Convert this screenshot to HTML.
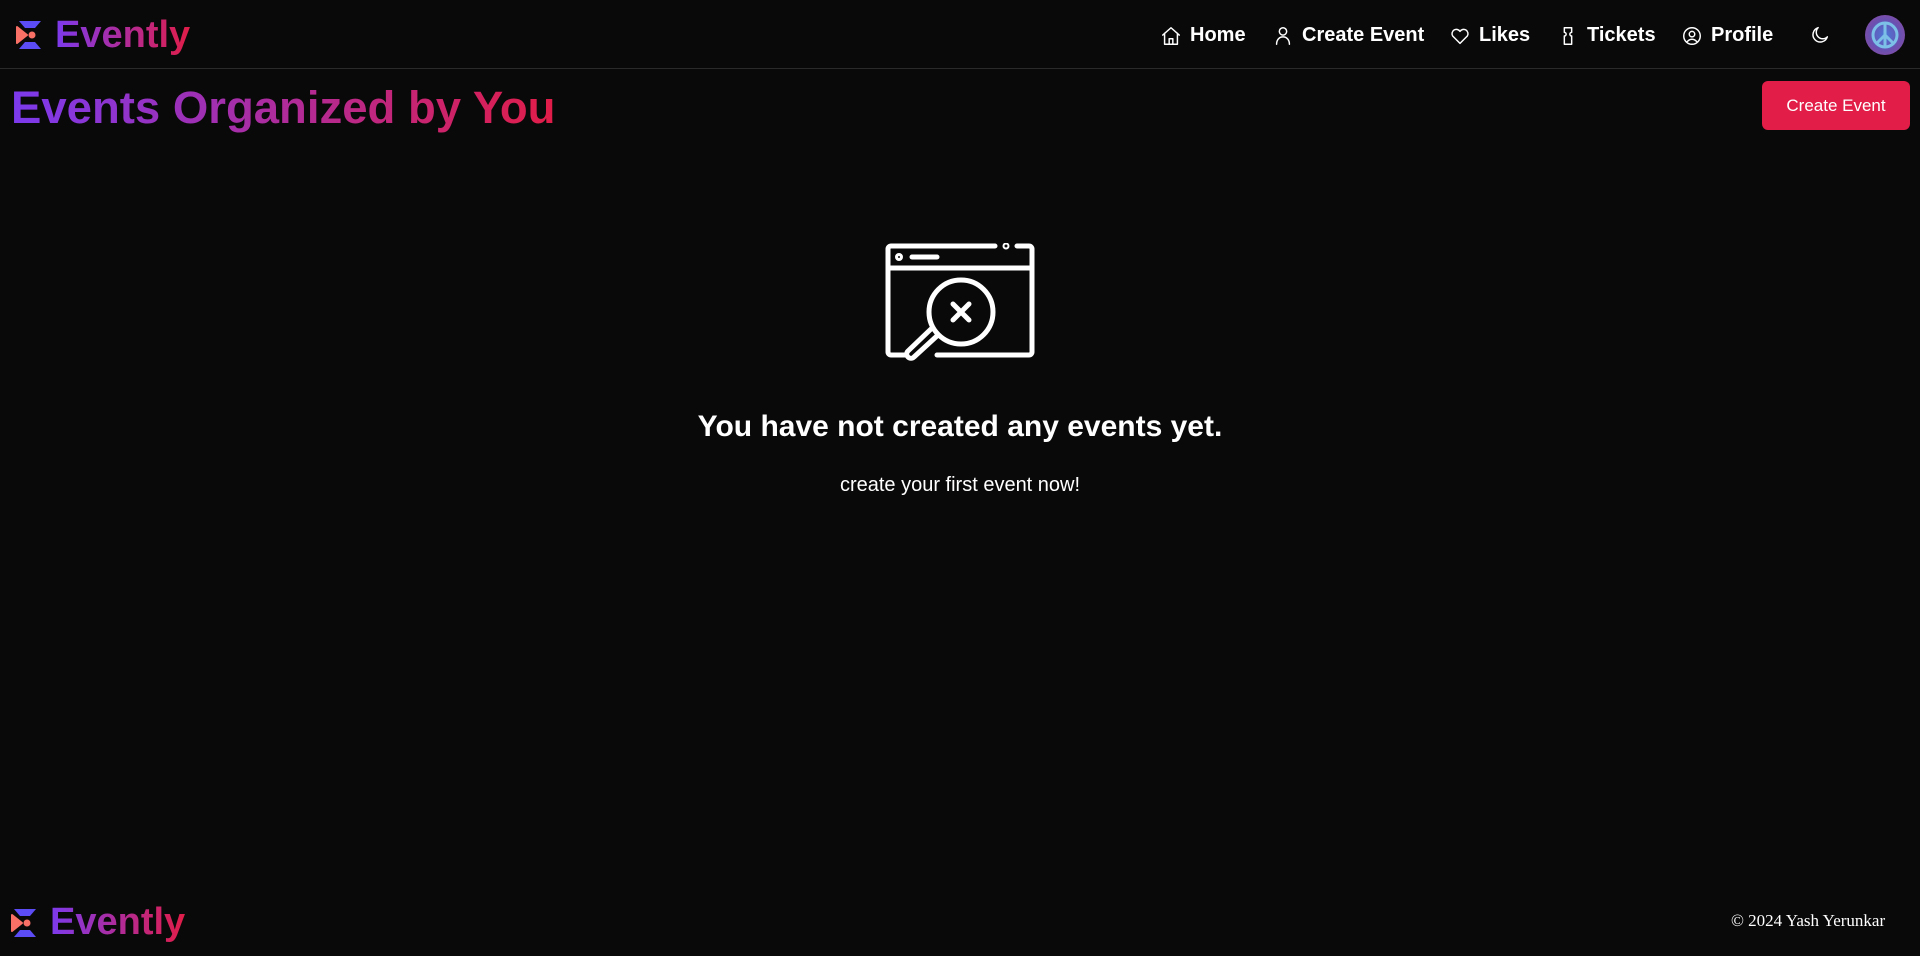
<!DOCTYPE html>
<html><head><meta charset="utf-8"><style>
*{margin:0;padding:0;box-sizing:border-box}
body{width:1920px;height:956px;background:#0a0909;color:#fff;font-family:"Liberation Sans",sans-serif;position:relative;overflow:hidden}
.grad{background:linear-gradient(90deg,#7c3aed,#e11d48);-webkit-background-clip:text;background-clip:text;color:transparent;font-weight:bold}
.nav{position:absolute;top:0;left:0;width:1920px;height:69px;border-bottom:1px solid #2a2a2a}
.abs{position:absolute}
.ni{position:absolute;top:24px;font-size:20px;font-weight:bold;color:#fff;display:flex;align-items:center;gap:8px}
svg.i{width:22px;height:22px;fill:none;stroke:#fff;stroke-width:1.6;stroke-linecap:round;stroke-linejoin:round}
</style></head><body>
<div class="nav">
  <svg class="abs" style="left:15px;top:20px" width="28" height="30" viewBox="0 0 28 30">
    <path d="M4 1h22l-6 7H10z" fill="#5b4cf5"/><path d="M4 29h22l-6-7H10z" fill="#5b4cf5"/>
    <path d="M2 7l10 8-10 8z" fill="#f97066" stroke="#f97066" stroke-width="2" stroke-linejoin="round"/><circle cx="17" cy="15" r="3.5" fill="#f97066"/>
  </svg>
  <div class="abs grad" style="left:55px;top:14px;font-size:38px">Evently</div>
  <div class="ni" style="left:1160px"><svg class="i" viewBox="0 0 24 24"><path d="M3 11l9-8 9 8M5 9v12h14V9M10 21v-6h4v6"/></svg>Home</div>
  <div class="ni" style="left:1272px"><svg class="i" viewBox="0 0 24 24"><circle cx="12" cy="7" r="4"/><path d="M5 21c0-5 3-8 7-8s7 3 7 8"/></svg>Create Event</div>
  <div class="ni" style="left:1449px"><svg class="i" viewBox="0 0 24 24"><path d="M12 20l-8-8a4.5 4.5 0 0 1 8-5 4.5 4.5 0 0 1 8 5z"/></svg>Likes</div>
  <div class="ni" style="left:1557px"><svg class="i" viewBox="0 0 24 24"><path d="M8 3h8v5a2 2 0 0 0 0 4v9H8v-9a2 2 0 0 0 0-4z"/></svg>Tickets</div>
  <div class="ni" style="left:1681px"><svg class="i" viewBox="0 0 24 24"><circle cx="12" cy="12" r="9"/><circle cx="12" cy="10" r="3"/><path d="M6.5 18.5c1.5-2 3.5-3 5.5-3s4 1 5.5 3"/></svg>Profile</div>
  <svg class="i abs" style="left:1809px;top:24px" viewBox="0 0 24 24"><path d="M20 14A8 8 0 1 1 10 4a6.5 6.5 0 0 0 10 10z"/></svg>
  <div class="abs" style="left:1865px;top:15px;width:40px;height:40px;border-radius:50%;background:radial-gradient(circle,#4a7ad8 0,#6a50b0 55%,#9a4aa0 100%)">
    <svg width="40" height="40" viewBox="0 0 40 40"><circle cx="20" cy="20" r="12" fill="none" stroke="#7cc0e8" stroke-width="3"/><path d="M20 8v24M20 20l-8 8M20 20l8 8" stroke="#7cc0e8" stroke-width="3"/></svg>
  </div>
</div>
<div class="abs grad" style="left:11px;top:82px;font-size:45.5px">Events Organized by You</div>
<div class="abs" style="left:1762px;top:81px;width:148px;height:49px;background:#e11d48;border-radius:6px;color:#fff;font-size:17px;display:flex;align-items:center;justify-content:center">Create Event</div>
<svg class="abs" style="left:885px;top:243px" width="150" height="120" viewBox="0 0 150 120" fill="none" stroke="#fff" stroke-width="5" stroke-linecap="round" stroke-linejoin="round">
  <path d="M110 3H6a3 3 0 0 0-3 3v103a3 3 0 0 0 3 3h14M52 112h92a3 3 0 0 0 3-3V6a3 3 0 0 0-3-3h-12"/>
  <path d="M4 25h142"/><circle cx="121" cy="3" r="1"/><circle cx="14" cy="14" r="1.5"/><path d="M27 14h25"/>
  <circle cx="76" cy="69" r="32"/><path d="M68 61l16 16M84 61l-16 16"/>
  <path d="M53 92l-24 22a4 4 0 0 1-6-6l23-22"/>
</svg>
<div class="abs" style="left:0;width:1920px;top:410px;text-align:center;font-size:30px;font-weight:bold">You have not created any events yet.</div>
<div class="abs" style="left:0;width:1920px;top:474px;text-align:center;font-size:20px">create your first event now!</div>
<svg class="abs" style="left:10px;top:908px" width="28" height="30" viewBox="0 0 28 30">
  <path d="M4 1h22l-6 7H10z" fill="#5b4cf5"/><path d="M4 29h22l-6-7H10z" fill="#5b4cf5"/>
  <path d="M2 7l10 8-10 8z" fill="#f97066" stroke="#f97066" stroke-width="2" stroke-linejoin="round"/><circle cx="17" cy="15" r="3.5" fill="#f97066"/>
</svg>
<div class="abs grad" style="left:50px;top:901px;font-size:38px">Evently</div>
<div class="abs" style="left:1731px;top:911px;font-family:'Liberation Serif',serif;font-size:17px">© 2024 Yash Yerunkar</div>
</body></html>
